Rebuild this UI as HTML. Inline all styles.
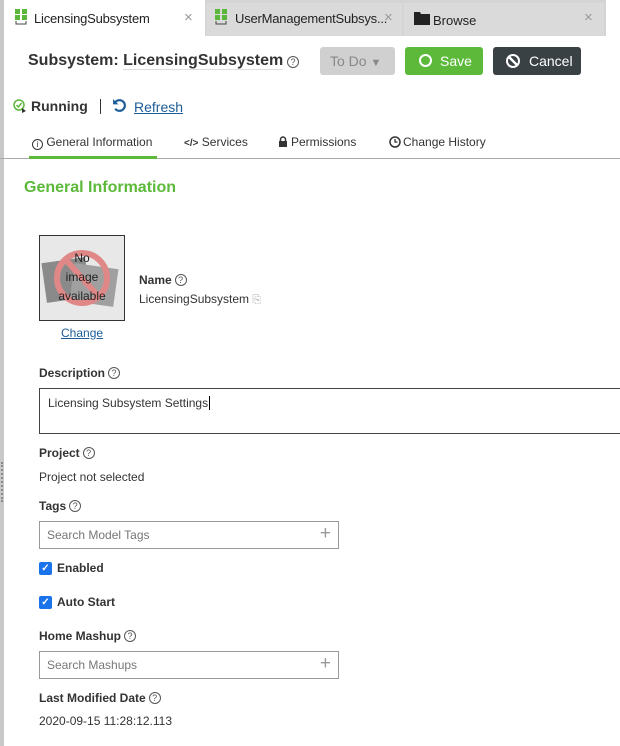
<!DOCTYPE html>
<html><head><style>
*{box-sizing:border-box;margin:0;padding:0}
body{width:620px;height:746px;overflow:hidden;background:#fff;font-family:"Liberation Sans",sans-serif;color:#333;position:relative}
.a{position:absolute;white-space:nowrap}
.q{display:inline-block;width:12px;height:12px;border:1px solid #555;border-radius:50%;font-size:9px;line-height:10px;text-align:center;color:#555;font-weight:normal;vertical-align:1px;margin-left:3px}
.lbl{font-size:12px;font-weight:bold;color:#333}
.val{font-size:12px;color:#333}
.inp{position:absolute;border:1px solid #999;background:#fff;font-size:12px;color:#777;padding-left:7px;line-height:26px}
.plus{position:absolute;right:7px;top:0;color:#999;font-size:19px;line-height:24px}
.cb{position:absolute;width:13px;height:13px;background:#1a73e8;border-radius:2px;color:#fff;font-size:10px;line-height:13px;text-align:center;font-weight:bold}
.tx{font-size:15px;color:#999}
</style></head><body>
<div class="a" style="left:0;top:0;width:4px;height:746px;background:#c8c8c8"></div>
<div class="a" style="left:1px;top:462px;width:2px;height:40px;border-left:2px dotted #888"></div>
<!-- tab bar -->
<div class="a" style="left:205px;top:0;width:401px;height:36px;background:#d4d4d4"></div>
<div class="a" style="left:206px;top:3px;width:196px;height:33px;background:#dadada"></div>
<div class="a" style="left:404px;top:3px;width:200px;height:33px;background:#dadada"></div>
<svg class="a" style="left:14px;top:9px" width="14" height="16" viewBox="0 0 14 16"><rect x="1" y="0" width="5" height="5" fill="#5bb73b"/><rect x="8" y="0" width="5" height="5" fill="#5bb73b"/><rect x="1" y="6" width="5" height="5" fill="#5bb73b"/><rect x="8" y="6" width="5" height="5" fill="#5bb73b"/><path d="M2 12v3h10v-3" stroke="#444" fill="none"/></svg>
<div class="a" style="left:34px;top:11px;font-size:13px;color:#222;letter-spacing:-0.2px">LicensingSubsystem</div>
<div class="a tx" style="left:184px;top:9px">×</div>
<svg class="a" style="left:214px;top:9px" width="14" height="16" viewBox="0 0 14 16"><rect x="1" y="0" width="5" height="5" fill="#5bb73b"/><rect x="8" y="0" width="5" height="5" fill="#5bb73b"/><rect x="1" y="6" width="5" height="5" fill="#5bb73b"/><rect x="8" y="6" width="5" height="5" fill="#5bb73b"/><path d="M2 12v3h10v-3" stroke="#444" fill="none"/></svg>
<div class="a" style="left:235px;top:11px;font-size:13px;color:#222;letter-spacing:-0.2px">UserManagementSubsys...</div>
<div class="a tx" style="left:384px;top:9px">×</div>
<svg class="a" style="left:414px;top:12px" width="16" height="13" viewBox="0 0 16 13"><path d="M0 0h6l1 2h9v11H0z" fill="#222"/></svg>
<div class="a" style="left:433px;top:13px;font-size:13px;color:#222">Browse</div>
<div class="a tx" style="left:584px;top:9px">×</div>
<!-- header -->
<div class="a" style="left:28px;top:52px;font-size:16px;font-weight:bold;color:#333">Subsystem: <span style="border-bottom:1px solid #ddd">LicensingSubsystem</span></div>
<div class="a" style="left:284px;top:53px"><span class="q">?</span></div>
<div class="a" style="left:320px;top:47px;width:75px;height:28px;background:#d0d0d0;border-radius:3px;color:#888;font-size:14px;line-height:28px;padding-left:10px">To Do <span style="font-size:11px">▼</span></div>
<div class="a" style="left:405px;top:47px;width:78px;height:28px;background:#5cb93a;border-radius:3px;color:#fff;font-size:14px;line-height:28px;padding-left:14px"><span style="display:inline-block;width:13px;height:13px;border:2px solid #fff;border-radius:50%;vertical-align:-1px;margin-right:8px"></span>Save</div>
<div class="a" style="left:493px;top:47px;width:88px;height:28px;background:#3a4145;border-radius:3px;color:#fff;font-size:14px;line-height:28px;padding-left:13px"><span style="display:inline-block;width:14px;height:14px;border:2px solid #fff;border-radius:50%;vertical-align:-2px;margin-right:9px;background:linear-gradient(45deg,transparent 42%,#fff 42%,#fff 58%,transparent 58%)"></span>Cancel</div>
<!-- running -->
<svg class="a" style="left:13px;top:99px" width="14" height="15" viewBox="0 0 14 15"><circle cx="6" cy="6" r="5" stroke="#5bb73b" fill="none" stroke-width="1.5"/><path d="M3.5 6l2 2 3-4" stroke="#5bb73b" fill="none" stroke-width="1.5"/><path d="M9 9l4 3-4 2z" fill="#333"/></svg>
<div class="a" style="left:31px;top:98px;font-size:14px;font-weight:bold;color:#333">Running</div>
<div class="a" style="left:100px;top:99px;width:1px;height:15px;background:#333"></div>
<svg class="a" style="left:112px;top:98px" width="15" height="15" viewBox="0 0 14 14"><path d="M3 4A5 5 0 1 1 3 10" stroke="#1c5d99" stroke-width="2" fill="none"/><path d="M1 1v5h5z" fill="#1c5d99"/></svg>
<div class="a" style="left:134px;top:99px;font-size:14px;color:#1c5d99;text-decoration:underline">Refresh</div>
<!-- nav tabs -->
<div class="a" style="left:0;top:158px;width:620px;height:1px;background:#aaa"></div>
<div class="a" style="left:29px;top:156px;width:128px;height:3px;background:#5cb93a"></div>
<div class="a" style="left:32px;top:135px;font-size:12px;color:#333"><span style="display:inline-block;width:11px;height:11px;border:1px solid #333;border-radius:50%;font-size:8px;line-height:9px;text-align:center;vertical-align:-1px">i</span> General Information</div>
<div class="a" style="left:184px;top:135px;font-size:12px;color:#333"><b style="font-size:10px">&lt;/&gt;</b> Services</div>
<div class="a" style="left:278px;top:135px;font-size:12px;color:#333"><svg width="10" height="11" viewBox="0 0 10 11" style="vertical-align:-1px;margin-right:3px"><path d="M2.5 5V3.5a2.5 2.5 0 0 1 5 0V5" stroke="#333" stroke-width="1.5" fill="none"/><rect x="1" y="5" width="8" height="6" fill="#333"/></svg>Permissions</div>
<div class="a" style="left:389px;top:135px;font-size:12px;color:#333"><svg width="12" height="12" viewBox="0 0 12 12" style="vertical-align:-2px;margin-right:2px"><circle cx="6" cy="6" r="5" stroke="#333" stroke-width="1.5" fill="none"/><path d="M6 3v3h2.5" stroke="#333" stroke-width="1.3" fill="none"/></svg>Change History</div>
<div class="a" style="left:24px;top:179px;font-size:16px;font-weight:bold;color:#5cb93a">General Information</div>
<!-- image -->
<div class="a" style="left:39px;top:235px;width:86px;height:86px;border:1px solid #333;background:#e8e8e8;overflow:hidden">
<svg width="86" height="86" style="position:absolute;left:0;top:0"><rect x="4" y="24" width="44" height="40" fill="#8a8a8a" transform="rotate(-8 26 44)"/><rect x="32" y="30" width="44" height="38" fill="#a0a0a0" transform="rotate(8 54 49)"/><circle cx="42" cy="42" r="25" stroke="#e08888" stroke-width="6" fill="none"/><path d="M26 24L58 60" stroke="#e08888" stroke-width="6"/></svg>
<div style="position:absolute;left:0;top:13px;width:84px;text-align:center;font-size:12px;line-height:19px;color:#222">No<br>image<br>available</div></div>
<div class="a" style="left:61px;top:326px;font-size:12px;color:#1c5d99;text-decoration:underline">Change</div>
<div class="a lbl" style="left:139px;top:273px">Name<span class="q">?</span></div>
<div class="a val" style="left:139px;top:292px">LicensingSubsystem <span style="color:#aaa;font-size:11px">⎘</span></div>
<div class="a lbl" style="left:39px;top:366px">Description<span class="q">?</span></div>
<div class="a" style="left:39px;top:388px;width:590px;height:46px;border:1px solid #444;font-size:12px;padding:7px 8px;color:#333">Licensing Subsystem Settings<span style="border-left:1px solid #000;margin-left:1px"></span></div>
<div class="a lbl" style="left:39px;top:446px">Project<span class="q">?</span></div>
<div class="a val" style="left:39px;top:470px">Project not selected</div>
<div class="a lbl" style="left:39px;top:499px">Tags<span class="q">?</span></div>
<div class="inp" style="left:39px;top:521px;width:300px;height:28px">Search Model Tags<span class="plus">+</span></div>
<div class="cb" style="left:39px;top:562px">✓</div>
<div class="a lbl" style="left:57px;top:561px">Enabled</div>
<div class="cb" style="left:39px;top:596px">✓</div>
<div class="a lbl" style="left:57px;top:595px">Auto Start</div>
<div class="a lbl" style="left:39px;top:629px">Home Mashup<span class="q">?</span></div>
<div class="inp" style="left:39px;top:651px;width:300px;height:28px">Search Mashups<span class="plus">+</span></div>
<div class="a lbl" style="left:39px;top:691px">Last Modified Date<span class="q">?</span></div>
<div class="a val" style="left:39px;top:714px">2020-09-15 11:28:12.113</div>
</body></html>
